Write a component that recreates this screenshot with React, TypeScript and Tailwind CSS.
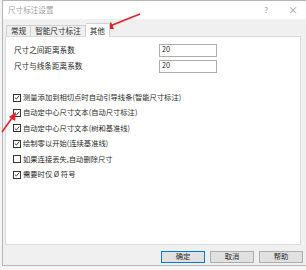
import React from "react";

const font = { fontFamily: '"Noto Sans CJK SC", "Noto Sans", sans-serif' };

function Check({ checked, label }: { checked: boolean; label: string }) {
  return (
    <div className="flex items-center h-[15.4px]">
      <div className="w-[8px] h-[8px] border border-[#333] bg-white flex items-center justify-center shrink-0">
        {checked && (
          <svg width="7" height="7" viewBox="0 0 7 7">
            <path d="M1 3.6 L2.8 5.3 L6 1.4" fill="none" stroke="#222" strokeWidth="1" />
          </svg>
        )}
      </div>
      <span className="ml-[2px] text-[7.3px] leading-none text-[#2a2a2a] whitespace-nowrap">{label}</span>
    </div>
  );
}

export default function App() {
  return (
    <div className="relative w-[306px] h-[270px] overflow-hidden bg-[#f4f4f4]" style={font}>
      <div className="ml-[2px] h-[266px] flex flex-col bg-[#f0f0f0] border-l border-b border-t border-[#b5b5b5]">
        <div className="h-[18px] bg-white flex items-center pl-[5px] pr-[8px]">
          <span className="text-[7.6px] text-[#a0a0a0] leading-none">尺寸标注设置</span>
          <span className="ml-auto text-[8px] text-[#999] leading-none mr-[20px]">?</span>
          <span className="text-[10px] text-[#999] leading-none">×</span>
        </div>
        <div className="flex items-end h-[17px] pl-[3px] mt-[0px]">
          <div className="h-[11px] px-[4px] flex items-center border border-b-0 border-[#d0d0d0] bg-[#f0f0f0] text-[7.6px] text-[#2a2a2a] leading-none">常规</div>
          <div className="h-[11px] px-[4px] flex items-center border border-l-0 border-b-0 border-[#d0d0d0] bg-[#f0f0f0] text-[7.6px] text-[#2a2a2a] leading-none">智能尺寸标注</div>
          <div className="h-[14px] px-[4px] -mb-[1px] relative z-10 flex items-center border border-l-0 border-b-0 border-[#d0d0d0] bg-white text-[7.6px] text-[#2a2a2a] leading-none">其他</div>
        </div>
        <div className="ml-[2px] mr-[5px] h-[209px] bg-white border border-[#d9d9d9] pl-[8px] pt-[6px]">
          <div className="flex items-center h-[14px]">
            <span className="w-[145px] text-[7.6px] text-[#2a2a2a] leading-none">尺寸之间距离系数</span>
            <div className="w-[58px] h-[13px] border border-[#adadad] flex items-center pl-[2px] text-[7.3px] text-[#2a2a2a] leading-none">20</div>
          </div>
          <div className="flex items-center h-[14px] mt-[2px]">
            <span className="w-[145px] text-[7.6px] text-[#2a2a2a] leading-none">尺寸与线条距离系数</span>
            <div className="w-[58px] h-[13px] border border-[#adadad] flex items-center pl-[2px] text-[7.3px] text-[#2a2a2a] leading-none">20</div>
          </div>
          <div className="mt-[17px] -ml-[1px] flex flex-col">
            <Check checked label="测量添加到相切点时自动引导线条(智能尺寸标注)" />
            <Check checked label="自动定中心尺寸文本(自动尺寸标注)" />
            <Check checked label="自动定中心尺寸文本(树和基准线)" />
            <Check checked label="绘制零以开始(连续基准线)" />
            <Check checked={false} label="如果连接丢失,自动删除尺寸" />
            <Check checked label="需要时仅 Ø 符号" />
          </div>
        </div>
        <div className="flex justify-end gap-[5px] pr-[3px] pt-[6px]">
          <div className="w-[44px] h-[12px] border border-[#0078d7] bg-[#e1e1e1] flex items-center justify-center text-[7.3px] text-[#2a2a2a] leading-none">确定</div>
          <div className="w-[44px] h-[12px] border border-[#adadad] bg-[#e1e1e1] flex items-center justify-center text-[7.3px] text-[#2a2a2a] leading-none">取消</div>
          <div className="w-[44px] h-[12px] border border-[#adadad] bg-[#e1e1e1] flex items-center justify-center text-[7.3px] text-[#2a2a2a] leading-none">帮助</div>
        </div>
      </div>
      <svg className="absolute left-0 top-0 pointer-events-none" width="306" height="270" viewBox="0 0 306 270">
        <line x1="140" y1="14" x2="110" y2="26" stroke="#e8202a" strokeWidth="1.6" />
        <polygon points="104,29 111,22 114,29" fill="#e8202a" />
        <line x1="2" y1="132" x2="12" y2="118" stroke="#e8202a" strokeWidth="1.6" />
        <polygon points="16,112 9,117 15,121" fill="#e8202a" />
      </svg>
    </div>
  );
}
